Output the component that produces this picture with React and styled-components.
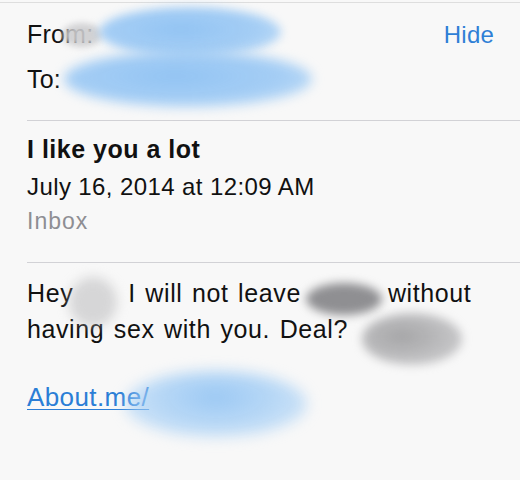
import React from 'react'
import styled, { createGlobalStyle } from 'styled-components'

const GlobalStyle = createGlobalStyle`
  html, body {
    margin: 0;
    padding: 0;
    background: #f8f8f8;
  }
  body {
    font-family: "Liberation Sans", Arial, sans-serif;
    color: #111;
    -webkit-font-smoothing: antialiased;
  }
`

const Page = styled.div`
  width: 520px;
  height: 480px;
  overflow: hidden;
  background: #f8f8f8;
`

const Header = styled.div`
  margin-top: 2px;
  border-top: 1px solid #dedede;
`

const Section = styled.div`
  margin-left: 27px;
  padding: ${({ pad }) => pad};
  border-bottom: ${({ rule }) => (rule ? '1px solid #d2d2d6' : 'none')};
`

const FieldRow = styled.div`
  display: flex;
  justify-content: space-between;
  align-items: baseline;
  font-size: 25px;
  line-height: 45px;
  letter-spacing: 0.2px;
`

const Label = styled.span`
  position: relative;
`

const HideButton = styled.a`
  position: relative;
  z-index: 2;
  font-size: 24px;
  color: #2f7fd6;
  text-decoration: none;
  cursor: pointer;
`

const Subject = styled.div`
  font-size: 25px;
  font-weight: bold;
  line-height: 36px;
  letter-spacing: 0.5px;
`

const DateLine = styled.div`
  margin-top: 2px;
  font-size: 24px;
  line-height: 36px;
  letter-spacing: 0.4px;
`

const Mailbox = styled.div`
  font-size: 23px;
  line-height: 32px;
  color: #8e8e93;
  letter-spacing: 1px;
`

const Message = styled.p`
  margin: 0;
  font-size: 25px;
  line-height: 36px;
  letter-spacing: 0.6px;
  word-spacing: 2px;
`

const LinkRow = styled.div`
  position: relative;
  margin-top: 32px;
  font-size: 26px;
  line-height: 36px;
  letter-spacing: 0.4px;
`

const Link = styled.a`
  color: #2b7ed6;
  text-decoration: underline;
  text-decoration-thickness: 1px;
  text-underline-offset: 3px;
`

/* inline hole in the text where a word was scribbled over */
const Gap = styled.span`
  position: relative;
  display: inline-block;
  width: ${({ w }) => w}px;
  height: 1px;
`

/* redaction scribble laid over the text */
const Smudge = styled.span`
  position: absolute;
  left: ${({ x }) => x}px;
  top: ${({ y }) => y}px;
  width: ${({ w }) => w}px;
  height: ${({ h }) => h}px;
  border-radius: 50%;
  background: ${({ tone }) => tone};
  filter: blur(${({ blur }) => blur || 5}px);
  pointer-events: none;
`

const BLUE =
  'radial-gradient(ellipse at 45% 45%, rgba(140,192,242,0.95) 0%, rgba(150,198,244,0.85) 55%, rgba(170,210,246,0.5) 100%)'
const BLUE_SOFT =
  'radial-gradient(ellipse at 50% 40%, rgba(145,195,243,0.9) 0%, rgba(160,204,245,0.7) 50%, rgba(180,214,247,0.35) 100%)'
const GRAY_DARK = 'rgba(125, 125, 128, 0.85)'
const GRAY =
  'radial-gradient(ellipse at 40% 45%, rgba(150,150,152,0.85) 0%, rgba(165,165,168,0.6) 70%, rgba(185,185,188,0.3) 100%)'
const GRAY_LIGHT = 'rgba(185, 185, 188, 0.55)'
const GRAY_COVER = 'rgba(205, 205, 207, 0.9)'

export default function App() {
  return (
    <>
      <GlobalStyle />
      <Page>
        <Header>
          <Section pad="9px 26px 18px 0" rule>
            <FieldRow>
              <Label>
                From:
                <Smudge x={35} y={11} w={40} h={24} tone={GRAY_COVER} blur={3} />
                <Smudge x={72} y={-5} w={182} h={50} tone={BLUE} blur={5} />
              </Label>
              <HideButton>Hide</HideButton>
            </FieldRow>
            <FieldRow>
              <Label>
                To:
                <Smudge x={37} y={-6} w={248} h={56} tone={BLUE} blur={6} />
              </Label>
            </FieldRow>
          </Section>
        </Header>

        <Section pad="10px 0 25px" rule>
          <Subject>I like you a lot</Subject>
          <DateLine>July 16, 2014 at 12:09 AM</DateLine>
          <Mailbox>Inbox</Mailbox>
        </Section>

        <Section pad="12px 0 0 0">
          <Message>
            Hey
            <Gap w={55}>
              <Smudge x={-4} y={-24} w={48} h={50} tone={GRAY_LIGHT} blur={6} />
            </Gap>
            I will not leave
            <Gap w={87}>
              <Smudge x={5} y={-18} w={76} h={32} tone={GRAY_DARK} blur={5} />
            </Gap>
            without
            <br />
            having sex with you. Deal?{' '}
            <Gap w={0}>
              <Smudge x={4} y={-24} w={100} h={52} tone={GRAY} blur={5} />
            </Gap>
          </Message>
          <LinkRow>
            <Link>About.me/</Link>
            <Smudge x={98} y={-8} w={182} h={66} tone={BLUE_SOFT} blur={7} />
          </LinkRow>
        </Section>
      </Page>
    </>
  )
}
